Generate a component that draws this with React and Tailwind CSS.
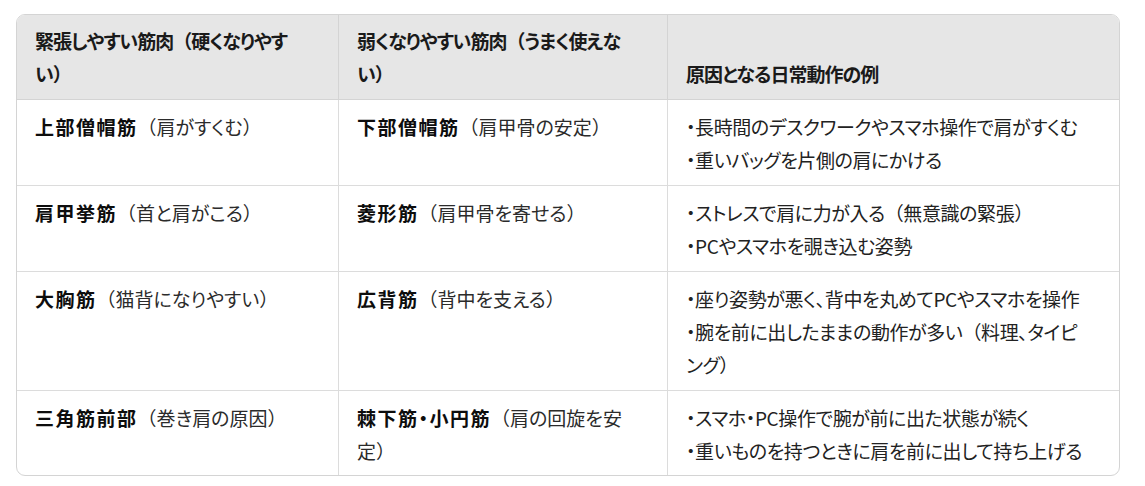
import React from "react";

function T({ s }) {
  const parts = s.split(/([（）])/);
  return (
    <>
      {parts.map((p, i) =>
        p === "（" || p === "）" ? (
          <span key={i} className="[font-feature-settings:normal]">
            {p}
          </span>
        ) : (
          <React.Fragment key={i}>{p}</React.Fragment>
        )
      )}
    </>
  );
}

// Each cell: list of lines; each line: list of [text, bold]
const rows = [
  {
    a: [[["上部僧帽筋", true], ["（肩がすくむ）", false]]],
    b: [[["下部僧帽筋", true], ["（肩甲骨の安定）", false]]],
    c: ["・長時間のデスクワークやスマホ操作で肩がすくむ", "・重いバッグを片側の肩にかける"],
  },
  {
    a: [[["肩甲挙筋", true], ["（首と肩がこる）", false]]],
    b: [[["菱形筋", true], ["（肩甲骨を寄せる）", false]]],
    c: ["・ストレスで肩に力が入る（無意識の緊張）", "・PCやスマホを覗き込む姿勢"],
  },
  {
    a: [[["大胸筋", true], ["（猫背になりやすい）", false]]],
    b: [[["広背筋", true], ["（背中を支える）", false]]],
    c: [
      "・座り姿勢が悪く、背中を丸めてPCやスマホを操作",
      "・腕を前に出したままの動作が多い（料理、タイピ",
      "ング）",
    ],
  },
  {
    a: [[["三角筋前部", true], ["（巻き肩の原因）", false]]],
    b: [
      [["棘下筋・小円筋", true], ["（肩の回旋を安", false]],
      [["定）", false]],
    ],
    c: ["・スマホ・PC操作で腕が前に出た状態が続く", "・重いものを持つときに肩を前に出して持ち上げる"],
  },
];

function NameCell({ lines }) {
  return (
    <>
      {lines.map((line, i) => (
        <div key={i} className="whitespace-nowrap">
          {line.map(([t, b], j) =>
            b ? (
              <span key={j} className="font-bold text-[#0d0d0d] tracking-[1.5px]">
                <T s={t} />
              </span>
            ) : (
              <span key={j} className="text-[#2b2b2b]">
                <T s={t} />
              </span>
            )
          )}
        </div>
      ))}
    </>
  );
}

const head =
  "bg-[#e6e6e6] border-b border-[#d4d4d4] pl-[18px] pr-[10px] pt-[9px] pb-[9px] flex items-end font-semibold text-[#1a1a1a] tracking-[-1px]";

export default function App() {
  return (
    <div className="bg-white w-[1145px] h-[486px] pt-[14px] pl-[16px] font-['Noto_Sans_CJK_JP',sans-serif] text-[19px] leading-[33px] text-[#1f1f1f] [font-feature-settings:'palt']">
      <div className="w-[1104px] border border-[#d4d4d4] rounded-[9px] overflow-hidden">
        <div className="grid grid-cols-[322px_329px_451px]">
          <div className={`${head} border-r`}>
            <div>
              <div className="whitespace-nowrap">
                <T s="緊張しやすい筋肉（硬くなりやす" />
              </div>
              <div className="whitespace-nowrap">
                <T s="い）" />
              </div>
            </div>
          </div>
          <div className={`${head} border-r`}>
            <div>
              <div className="whitespace-nowrap">
                <T s="弱くなりやすい筋肉（うまく使えな" />
              </div>
              <div className="whitespace-nowrap">
                <T s="い）" />
              </div>
            </div>
          </div>
          <div className={head}>
            <div className="whitespace-nowrap">原因となる日常動作の例</div>
          </div>
          {rows.map((r, i) => {
            const last = i === rows.length - 1;
            const pad = last ? "pt-[10px] pb-[8px]" : "pt-[10px] pb-[9px] border-b";
            return (
              <React.Fragment key={i}>
                <div className={`border-r border-[#dcdcdc] pl-[18px] pr-[10px] ${pad}`}>
                  <NameCell lines={r.a} />
                </div>
                <div className={`border-r border-[#dcdcdc] pl-[18px] pr-[10px] ${pad}`}>
                  <NameCell lines={r.b} />
                </div>
                <div className={`border-[#dcdcdc] pl-[18px] pr-[10px] text-[#222222] tracking-[-0.4px] ${pad}`}>
                  {r.c.map((t, j) => (
                    <div key={j} className="whitespace-nowrap">
                      <T s={t} />
                    </div>
                  ))}
                </div>
              </React.Fragment>
            );
          })}
        </div>
      </div>
    </div>
  );
}
